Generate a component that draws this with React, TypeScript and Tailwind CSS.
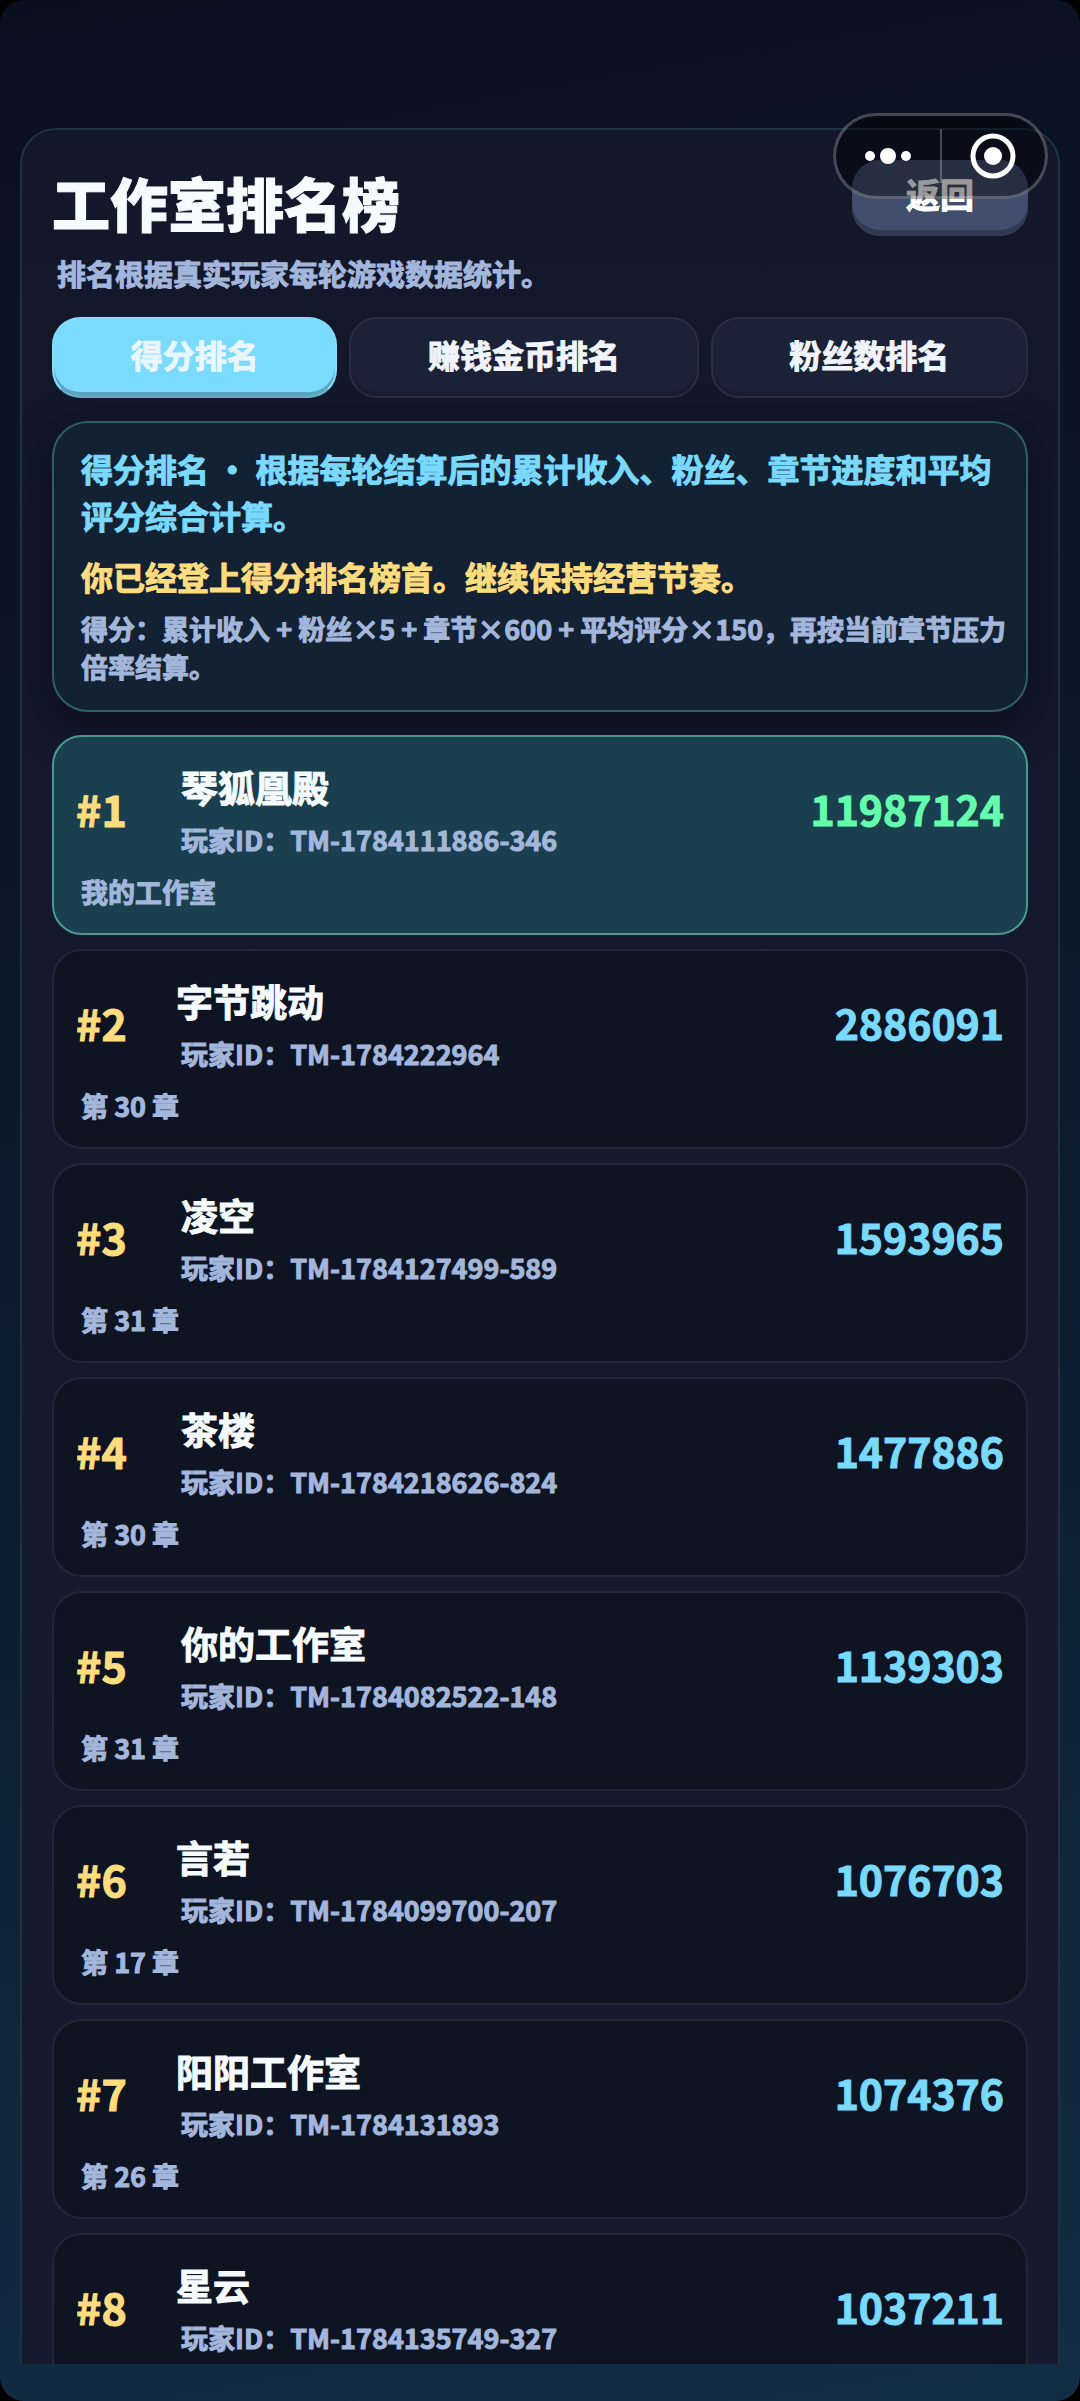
import { useState } from 'react'

interface Entry {
  rank:    number
  name:    string
  id:      string
  note?:   string
  score:   number
  inset?:  boolean
  mine?:   boolean
}

const tabs = ['得分排名', '赚钱金币排名', '粉丝数排名']

const entries: Entry[] = [
  { rank: 1, name: '琴狐凰殿',   id: 'TM-1784111886-346', note: '我的工作室', score: 11987124, inset: true, mine: true },
  { rank: 2, name: '字节跳动',   id: 'TM-1784222964',     note: '第 30 章',   score: 2886091 },
  { rank: 3, name: '凌空',       id: 'TM-1784127499-589', note: '第 31 章',   score: 1593965, inset: true },
  { rank: 4, name: '茶楼',       id: 'TM-1784218626-824', note: '第 30 章',   score: 1477886, inset: true },
  { rank: 5, name: '你的工作室', id: 'TM-1784082522-148', note: '第 31 章',   score: 1139303, inset: true },
  { rank: 6, name: '言若',       id: 'TM-1784099700-207', note: '第 17 章',   score: 1076703 },
  { rank: 7, name: '阳阳工作室', id: 'TM-1784131893',     note: '第 26 章',   score: 1074376 },
  { rank: 8, name: '星云',       id: 'TM-1784135749-327', score: 1037211 },
]

function Capsule() {
  return (
    <div className="absolute top-[113px] right-8 flex h-[86px] w-[215px] items-center rounded-full border-3 border-white/25 bg-black/40">
      <button aria-label="更多" className="flex flex-1 justify-center">
        <svg width="46" height="18" viewBox="0 0 46 18" fill="#fff">
          <circle cx="5" cy="9" r="5" />
          <circle cx="23" cy="9" r="8" />
          <circle cx="41" cy="9" r="5" />
        </svg>
      </button>
      <span className="h-[54px] w-[2px] bg-white/25" />
      <button aria-label="关闭" className="flex flex-1 justify-center">
        <svg width="46" height="46" viewBox="0 0 46 46">
          <circle cx="23" cy="23" r="20" fill="none" stroke="#fff" strokeWidth="5" />
          <circle cx="23" cy="23" r="9" fill="#fff" />
        </svg>
      </button>
    </div>
  )
}

function Row({ entry }: { entry: Entry }) {
  return (
    <li
      className={`min-h-[200px] rounded-[30px] border-2 pt-6 pr-[22px] pb-[14px] pl-[22px] ${
        entry.mine ? 'border-[#4a9a94] bg-[#1a404f]' : 'border-[#212637] bg-[#0f1422]'
      }`}
    >
      <div className="flex items-start">
        <span className="w-25 text-[43px] leading-[94px] text-[#ffdc7d]">#{entry.rank}</span>
        <div className="flex-1">
          <h2 className={`text-[37px] leading-[52px] text-[#f5fbff] ${entry.inset ? 'pl-[5px]' : ''}`}>{entry.name}</h2>
          <p className="pl-[5px] text-[27px] leading-[54px] text-[#a3b6dc]">玩家ID：{entry.id}</p>
        </div>
        <span className={`text-[41px] leading-[94px] ${entry.mine ? 'text-[#63ffac]' : 'text-[#79d9ff]'}`}>
          {entry.score}
        </span>
      </div>
      {entry.note && <p className="pl-[5px] text-[27px] leading-[50px] text-[#a3b6dc]">{entry.note}</p>}
    </li>
  )
}

export default function App() {
  const [active, setActive] = useState(0)

  return (
    <div className="h-screen bg-black font-['Noto_Sans_CJK_SC',sans-serif] font-bold [-webkit-text-stroke:1px]">
      <div className="relative flex h-full flex-col overflow-hidden rounded-3xl bg-linear-170 from-[#0a0f20] via-[#0b1b2d] to-[#132d44] px-5 pt-32 pb-[37px]">
        <main className="min-h-0 flex-1 overflow-hidden rounded-t-[36px] border-2 border-b-0 border-[#1d3340] bg-linear-to-b from-[#12172a] to-[#161a2e] px-[30px] pt-[30px]">
          <header className="flex items-start justify-between">
            <div>
              <h1 className="text-[58px] leading-[84px] font-black text-[#f5fbff]">工作室排名榜</h1>
              <p className="pl-[5px] text-[29px] leading-[58px] text-[#a3b6dc]">排名根据真实玩家每轮游戏数据统计。</p>
            </div>
            <button className="h-[76px] w-44 rounded-[28px] bg-[#414e6d] pb-[10px] text-[34px] text-white shadow-[inset_0_-6px_0_#313a50]">
              返回
            </button>
          </header>

          <nav className="mt-[15px] flex gap-3">
            {tabs.map((tab, i) => (
              <button
                key={tab}
                onClick={() => setActive(i)}
                className={`h-[81px] flex-auto rounded-[28px] border-2 pb-2 text-[32px] ${
                  i === active
                    ? 'border-[#86dcfb] border-b-[#69aec6] bg-[#7adbff] text-[#eaf6ff] shadow-[inset_0_-4px_0_#5ca5bf]'
                    : 'border-[#282e43] bg-[#1b2136] text-[#f0f4ff] shadow-[inset_0_-4px_0_#171c2e]'
                }`}
              >
                {tab}
              </button>
            ))}
          </nav>

          <section className="mt-[23px] rounded-[36px] border-2 border-[#2f5f66] bg-[#132232] pt-[22px] pr-[18px] pb-6 pl-[27px] shadow-[0_12px_40px_rgba(10,6,16,0.5)]">
            <p className="text-[32px] leading-[47px] text-[#79d9ff]">
              得分排名 ・ 根据每轮结算后的累计收入、粉丝、章节进度和平均评分综合计算。
            </p>
            <p className="mt-[14px] text-[32px] leading-[47px] text-[#ffdc7d]">你已经登上得分排名榜首。继续保持经营节奏。</p>
            <p className="mt-[10px] text-[27px] leading-[38px] text-[#a3b6dc]">
              得分：累计收入 + 粉丝×5 + 章节×600 + 平均评分×150，再按当前章节压力倍率结算。
            </p>
          </section>

          <ol className="mt-[23px] flex flex-col gap-[14px]">
            {entries.map((entry) => (
              <Row key={entry.rank} entry={entry} />
            ))}
          </ol>
        </main>
        <Capsule />
      </div>
    </div>
  )
}
